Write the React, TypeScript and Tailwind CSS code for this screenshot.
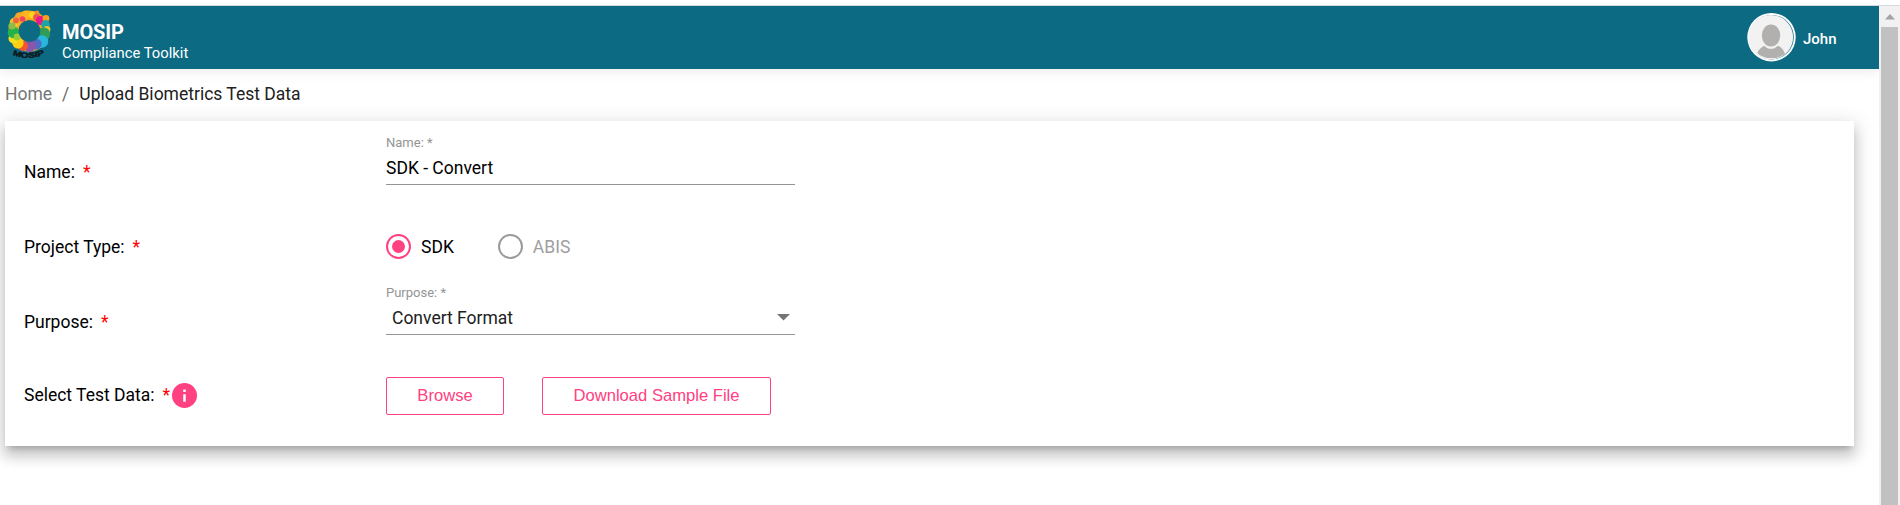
import React from "react";

function Logo() {
  return (
    <svg width="46" height="54" viewBox="0 0 46 54" className="shrink-0">
      <g>
        <circle cx="23" cy="23" r="15.500" fill="none" stroke="#f9a61c" strokeWidth="10" />
        <circle cx="8.500" cy="14.500" r="4.800" fill="#f0c52c" />
        <circle cx="13.500" cy="8.800" r="4.600" fill="#f6a52a" />
        <circle cx="20" cy="6.800" r="4.400" fill="#ffb51d" />
        <circle cx="16.500" cy="11" r="2.800" fill="#ef4267" />
        <circle cx="10" cy="12.500" r="3" fill="#f0643c" />
        <circle cx="26.500" cy="7" r="3.400" fill="#fbd51f" />
        <circle cx="31" cy="5" r="2.400" fill="#f58b2c" />
        <circle cx="30.500" cy="9.500" r="3.400" fill="#f0574a" />
        <circle cx="34.500" cy="12.500" r="4.600" fill="#e6168b" />
        <circle cx="40" cy="10.500" r="3.400" fill="#f7a022" />
        <circle cx="39.500" cy="16.500" r="4.400" fill="#1fa4a5" />
        <circle cx="41" cy="21.500" r="3.400" fill="#e6c62a" />
        <circle cx="37.500" cy="26" r="6.600" fill="#2f9d58" />
        <circle cx="36" cy="33.500" r="6.200" fill="#29b7dd" />
        <circle cx="30" cy="36" r="5.600" fill="#4b6fc6" />
        <circle cx="23.500" cy="37.500" r="6.400" fill="#8b55ae" />
        <circle cx="17" cy="38" r="5" fill="#f1562f" />
        <circle cx="12" cy="35" r="5.600" fill="#ffcf13" />
        <circle cx="7.500" cy="30.500" r="5" fill="#f7df1f" />
        <circle cx="7.500" cy="24.500" r="5.800" fill="#22b24c" />
        <circle cx="11" cy="29" r="3.400" fill="#9acb35" />
        <circle cx="6" cy="18" r="3.600" fill="#8dbd45" />
      </g>
      <circle cx="23.500" cy="23" r="10.800" fill="#0c6a83" />
      <path id="logo-arc" d="M6.500 46.800 Q22 53.500 41 45.800" fill="none" />
      <text fontFamily="Liberation Sans, sans-serif" fontWeight="700" fontSize="7.500" fill="#0b161b" stroke="#0b161b" strokeWidth="0.400">
        <textPath href="#logo-arc" textLength="33" lengthAdjust="spacingAndGlyphs">MOSIP</textPath>
      </text>
    </svg>
  );
}

function Avatar() {
  return (
    <svg width="50" height="50" viewBox="0 0 50 50">
      <defs>
        <clipPath id="face">
          <circle cx="24.500" cy="24" r="21.500" />
        </clipPath>
      </defs>
      <circle cx="24.500" cy="24.200" r="24.200" fill="#fff" />
      <circle cx="24.500" cy="24.200" r="22.300" fill="#0c6a83" />
      <circle cx="23.800" cy="24.200" r="22.300" fill="#f2f2f2" />
      <g clipPath="url(#face)">
        <path d="M9 45c1.500-9 6.500-13.500 15-13.500S37.500 36 39 45z" fill="#b1b0af" />
        <ellipse cx="24" cy="23.500" rx="10.200" ry="12.300" fill="#f2f2f2" />
        <ellipse cx="24" cy="22.500" rx="9.200" ry="11" fill="#b1b0af" />
      </g>
    </svg>
  );
}

function Label({ text, children }: { text: string; children?: React.ReactNode }) {
  return (
    <div className="flex h-[26px] w-[362px] shrink-0 items-center text-[17.5px] text-black">
      <span>{text}</span>
      <span className="ml-[8px] text-[#ff0000]">*</span>
      {children}
    </div>
  );
}

function Radio({ text, checked }: { text: string; checked?: boolean }) {
  return (
    <div className={checked ? "flex items-center gap-[10px] text-black" : "flex items-center gap-[10px] text-[#9e9e9e]"}>
      <span
        className={
          checked
            ? "flex size-[25px] items-center justify-center rounded-full border-2 border-[#ff4081]"
            : "size-[25px] rounded-full border-2 border-[#9b9b9b]"
        }
      >
        {checked && <span className="size-[13px] rounded-full bg-[#ff4081]" />}
      </span>
      <span className="pt-px text-[17.5px] leading-[24px]">{text}</span>
    </div>
  );
}

export default function App() {
  return (
    <div className="flex h-[505px] w-[1900px] flex-col overflow-hidden bg-white font-[Roboto,sans-serif]">
      <div className="h-[6px] shrink-0 border-b border-[#d5dadb]" />
      <div className="flex min-h-0 flex-1">
        <div className="flex w-[1879px] flex-col overflow-hidden">
          <header className="flex h-[63px] shrink-0 items-start justify-between bg-[#0c6a83] text-white shadow-[0_2px_12px_rgba(0,0,0,0.09)]">
            <div className="flex pl-[6px] pt-[2px]">
              <Logo />
              <div className="pl-[10px] pt-[13px]">
                <div className="text-[20px] font-bold leading-[22px] tracking-[-0.1px]">MOSIP</div>
                <div className="text-[14.8px] leading-[20px]">Compliance Toolkit</div>
              </div>
            </div>
            <div className="flex w-[132px] items-center pt-[7px]">
              <Avatar />
              <span className="pl-[6px] pt-[2px] text-[15px] font-medium">John</span>
            </div>
          </header>
          <nav className="flex h-[52px] shrink-0 items-center pb-[2px] pl-[5px] text-[17.5px] leading-[26px]">
            <span className="text-[#757575]">Home</span>
            <span className="px-[10px] text-[#6b6b6b]">/</span>
            <span className="text-[#212121]">Upload Biometrics Test Data</span>
          </nav>
          <main className="ml-[5px] flex h-[325px] w-[1849px] shrink-0 flex-col bg-white pl-[19px] shadow-[0_6px_6px_-4px_rgba(0,0,0,0.2),0_10px_12px_1px_rgba(0,0,0,0.14),0_4px_18px_3px_rgba(0,0,0,0.12)]">
            <div className="flex h-[88px] items-start">
              <div className="pt-[38px]">
                <Label text="Name:" />
              </div>
              <div className="mt-[14px] h-[50px] w-[409px] border-b border-[#949494]">
                <div className="text-[13px] leading-[16px] text-[#949494]">Name: *</div>
                <div className="pt-[4px] text-[17.5px] leading-[26px] text-black">SDK - Convert</div>
              </div>
            </div>
            <div className="flex h-[76px] items-center">
              <Label text="Project Type:" />
              <div className="flex items-center gap-[44px] pb-px">
                <Radio text="SDK" checked />
                <Radio text="ABIS" />
              </div>
            </div>
            <div className="flex h-[76px] items-start">
              <div className="pt-[24px]">
                <Label text="Purpose:" />
              </div>
              <div className="h-[50px] w-[409px] border-b border-[#949494]">
                <div className="text-[13px] leading-[16px] text-[#949494]">Purpose: *</div>
                <div className="flex items-center justify-between pl-[6px] pr-[5px] pt-[4px] text-[17.5px] leading-[26px] text-[#212121]">
                  <span>Convert Format</span>
                  <svg width="13" height="7" viewBox="0 0 13 7" className="mb-[2px]">
                    <path d="M0 0h13L6.500 6.500z" fill="#757575" />
                  </svg>
                </div>
              </div>
            </div>
            <div className="flex h-[70px] items-center">
              <div className="pb-[2px]">
                <Label text="Select Test Data:">
                  <svg width="25" height="25" viewBox="0 0 25 25" className="ml-[2px] mt-px">
                    <circle cx="12.500" cy="12.500" r="12.500" fill="#ff4081" />
                    <path d="M11.250 6.500h2.500V9h-2.500zM11.250 11.250h2.500v7.500h-2.500z" fill="#fff" />
                  </svg>
                </Label>
              </div>
              <button className="h-[38px] w-[118px] rounded-[2px] border border-[#ff4081] font-['Liberation_Sans',sans-serif] text-[16.600px] leading-[24px] text-[#ff4081]">
                Browse
              </button>
              <button className="ml-[38px] h-[38px] w-[229px] rounded-[2px] border border-[#ff4081] font-['Liberation_Sans',sans-serif] text-[16.600px] leading-[24px] text-[#ff4081]">
                Download Sample File
              </button>
            </div>
          </main>
        </div>
        <div className="flex w-[21px] shrink-0 flex-col items-center bg-[#f1f1f1]">
          <div className="flex h-[21px] shrink-0 items-center justify-center">
            <svg width="10" height="6" viewBox="0 0 10 6">
              <path d="M0 5.500L5 0l5 5.500z" fill="#a3a3a3" />
            </svg>
          </div>
          <div className="w-[17px] flex-1 bg-[#c1c1c1]" />
        </div>
      </div>
    </div>
  );
}
